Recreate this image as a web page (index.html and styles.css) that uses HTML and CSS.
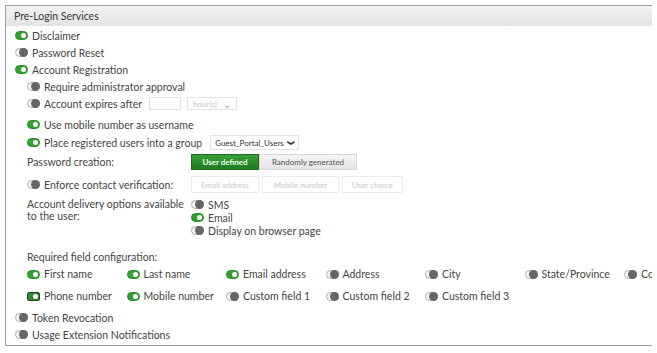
FILE: index.html
```html
<!DOCTYPE html>
<html lang="en">
<head>
    <meta charset="UTF-8">
    <title>Pre-Login Services</title>
    <link rel="stylesheet" href="styles.css">
</head>
<body>
    <div class="panel">
        <div class="panel-header">Pre-Login Services</div>
        <div class="panel-body">
            <div class="row"><span class="toggle on"></span>Disclaimer</div>
            <div class="row"><span class="toggle"></span>Password Reset</div>
            <div class="row"><span class="toggle on"></span>Account Registration</div>

            <div class="sub">
                <div class="row"><span class="toggle"></span>Require administrator approval</div>
                <div class="row">
                    <span class="toggle"></span>Account expires after
                    <span class="input disabled expires-input"></span>
                    <span class="select disabled hours">hour(s) <span class="chev light">&#8964;</span></span>
                </div>
                <div class="row mt4"><span class="toggle on"></span>Use mobile number as username</div>
                <div class="row tall">
                    <span class="toggle on"></span>Place registered users into a group
                    <span class="select group">Guest_Portal_Users <span class="chev">&#10095;</span></span>
                </div>
                <div class="row tall">
                    <span class="label">Password creation:</span>
                    <span class="btn-group">
                        <span class="seg active">User defined</span>
                        <span class="seg">Randomly generated</span>
                    </span>
                </div>
                <div class="row tall mt4">
                    <span class="label with-toggle"><span class="toggle"></span>Enforce contact verification:</span>
                    <span class="btn-group off">
                        <span class="seg">Email address</span>
                        <span class="seg">Mobile number</span>
                        <span class="seg">User choice</span>
                    </span>
                </div>
                <div class="delivery">
                    <span class="label wrap">Account delivery options available<br>to the user:</span>
                    <div class="options">
                        <div class="opt"><span class="toggle"></span>SMS</div>
                        <div class="opt"><span class="toggle on"></span>Email</div>
                        <div class="opt"><span class="toggle"></span>Display on browser page</div>
                    </div>
                </div>

                <div class="field-title">Required field configuration:</div>
                <div class="fields">
                    <div class="field"><span class="toggle on"></span>First name</div>
                    <div class="field"><span class="toggle on"></span>Last name</div>
                    <div class="field"><span class="toggle on"></span>Email address</div>
                    <div class="field"><span class="toggle"></span>Address</div>
                    <div class="field"><span class="toggle"></span>City</div>
                    <div class="field"><span class="toggle"></span>State/Province</div>
                    <div class="field"><span class="toggle"></span>Country</div>
                </div>
                <div class="fields mt4">
                    <div class="field"><span class="toggle on focus"></span>Phone number</div>
                    <div class="field"><span class="toggle on"></span>Mobile number</div>
                    <div class="field"><span class="toggle"></span>Custom field 1</div>
                    <div class="field"><span class="toggle"></span>Custom field 2</div>
                    <div class="field"><span class="toggle"></span>Custom field 3</div>
                </div>
            </div>

            <div class="row mt4"><span class="toggle"></span>Token Revocation</div>
            <div class="row"><span class="toggle"></span>Usage Extension Notifications</div>
        </div>
    </div>
</body>
</html>
```

FILE: styles.css
```css
body {
    margin: 0;
    font-family: Lato, "Open Sans", sans-serif;
    font-size: 10.5px;
    color: #454545;
    background: #fff;
}
.panel {
    margin: 5px 0 0 5px;
    width: 646px;
    border: 1px solid #9c9c9c;
    border-right: none;
    overflow: hidden;
}
.panel-header {
    height: 20px;
    line-height: 20px;
    padding-left: 8px;
    background: linear-gradient(#f2f2f2, #e3e3e3);
    color: #383838;
}
.panel-body {
    padding: 1px 0 2px 9px;
}
.row {
    display: flex;
    align-items: center;
    height: 17px;
    white-space: nowrap;
}
.row.tall {
    height: 19px;
}
.mt4 {
    margin-top: 4px;
}
.sub {
    padding-left: 12px;
}
.toggle {
    position: relative;
    display: inline-block;
    flex: none;
    width: 11px;
    height: 7px;
    border: 1px solid #b0b0b0;
    border-radius: 5px;
    background: #f6f6f6;
    margin-right: 4px;
}
.toggle::after {
    content: "";
    position: absolute;
    right: -1px;
    top: -1px;
    width: 9px;
    height: 9px;
    border-radius: 50%;
    background: #666;
}
.toggle.on {
    background: #34a034;
    border-color: #2a8a2a;
}
.toggle.on::after {
    right: 1px;
    top: 1px;
    width: 5px;
    height: 5px;
    background: #fff;
}
.toggle.focus {
    border-radius: 2px;
    border: 1px solid #1d4a1d;
    background: #2f8a2f;
}
.label {
    width: 164px;
    flex: none;
}
.label.with-toggle {
    display: flex;
    align-items: center;
}
.input {
    display: inline-block;
    width: 30px;
    height: 11px;
    border: 1px solid #e0e0e0;
    margin-left: 7px;
}
.select {
    display: inline-flex;
    align-items: center;
    justify-content: space-between;
    border: 1px solid #e2e2e2;
    font-size: 8px;
    box-sizing: border-box;
}
.select.hours {
    width: 50px;
    height: 13px;
    margin-left: 6px;
    padding: 0 5px;
    color: #c4c4c4;
}
.select.group {
    width: 89px;
    height: 15px;
    margin-left: 8px;
    padding: 0 4px;
    color: #333;
}
.chev {
    font-size: 7px;
    font-weight: bold;
    transform: rotate(90deg);
}
.chev.light {
    transform: none;
    font-size: 10px;
    line-height: 6px;
    color: #bbb;
}
.btn-group {
    display: flex;
    font-size: 8px;
}
.seg {
    display: flex;
    align-items: center;
    justify-content: center;
    height: 16px;
    box-sizing: border-box;
    border: 1px solid #d8d8d8;
    background: linear-gradient(#f4f4f4, #e4e4e4);
    color: #555;
    width: 98px;
}
.seg.active {
    width: 68px;
    background: linear-gradient(#3aa03a, #1f7a1f);
    border-color: #1f6e1f;
    color: #e8ffe8;
    font-weight: bold;
}
.btn-group.off {
    gap: 3px;
}
.btn-group.off .seg {
    height: 17px;
    background: #fff;
    border-color: #ececec;
    color: #c6c6c6;
}
.btn-group.off .seg:nth-child(1) {
    width: 68px;
}
.btn-group.off .seg:nth-child(2) {
    width: 77px;
}
.btn-group.off .seg:nth-child(3) {
    width: 61px;
}
.delivery {
    display: flex;
    margin-top: 4px;
}
.label.wrap {
    white-space: nowrap;
    line-height: 12px;
}
.opt {
    display: flex;
    align-items: center;
    height: 13px;
}
.field-title {
    margin-top: 12px;
    height: 16px;
    line-height: 16px;
}
.fields {
    display: grid;
    grid-template-columns: repeat(7, 99.5px);
    height: 18px;
}
.field {
    display: flex;
    align-items: center;
    white-space: nowrap;
}
```
